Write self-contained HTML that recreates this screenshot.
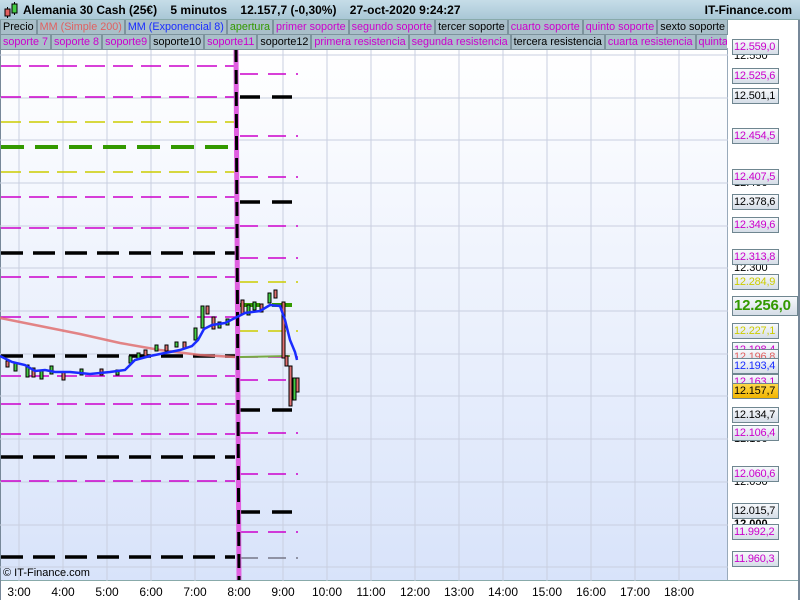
<!DOCTYPE html>
<html><head><meta charset="utf-8"><style>
body{margin:0;width:800px;height:600px;overflow:hidden;background:#fff;font-family:"Liberation Sans",sans-serif;position:relative}
.hdr{position:absolute;left:0;top:0;width:800px;height:19px;background:linear-gradient(#c6dde8,#a9c7d6);border-bottom:1px solid #8aa;font-weight:bold;font-size:12px}
.hdr span{position:absolute;top:3px}
.leg{position:absolute;left:0;height:15px;font-size:10.8px;display:flex}
.leg div{background:#a9bfc9;border:1px solid #7d939d;border-top:none;padding:0 2px;line-height:14px;white-space:nowrap;margin-right:0}
.lbl{position:absolute;left:732px;font-size:11px;line-height:14px;text-align:left;padding-left:1px;background:linear-gradient(#f7f9fc,#d5dde7);border:1px solid #6f8690;box-sizing:border-box;width:47px;height:16px;letter-spacing:-0.2px;white-space:nowrap}
.ax{position:absolute;left:734px;font-size:11px;color:#000}
.t{position:absolute;top:585px;font-size:12px;width:40px;text-align:center;margin-left:-20px}
</style></head><body>
<svg width="800" height="600" style="position:absolute;left:0;top:0">
<defs><linearGradient id="g" x1="0" y1="0" x2="0" y2="1"><stop offset="0" stop-color="#ffffff"/><stop offset="1" stop-color="#d8e3fa"/></linearGradient></defs>
<rect x="0" y="48" width="728" height="533" fill="url(#g)"/>
<rect x="728" y="48" width="72" height="533" fill="#fff"/>
<line x1="727.5" y1="48" x2="727.5" y2="581" stroke="#9ab" stroke-width="1"/>
<line x1="0" y1="580.5" x2="800" y2="580.5" stroke="#8aa"/>
<line x1="0.5" y1="20" x2="0.5" y2="600" stroke="#789"/>
<line x1="799" y1="20" x2="799" y2="600" stroke="#789" stroke-width="2"/>
<g stroke="#c9cfe0" stroke-width="1">
<line x1="0" y1="55" x2="728" y2="55"/><line x1="0" y1="98" x2="728" y2="98"/><line x1="0" y1="140" x2="728" y2="140"/><line x1="0" y1="183" x2="728" y2="183"/><line x1="0" y1="226" x2="728" y2="226"/><line x1="0" y1="268" x2="728" y2="268"/><line x1="0" y1="311" x2="728" y2="311"/><line x1="0" y1="354" x2="728" y2="354"/><line x1="0" y1="396" x2="728" y2="396"/><line x1="0" y1="439" x2="728" y2="439"/><line x1="0" y1="482" x2="728" y2="482"/><line x1="0" y1="525" x2="728" y2="525"/><line x1="0" y1="567" x2="728" y2="567"/>
<line x1="19" y1="48" x2="19" y2="581"/><line x1="63" y1="48" x2="63" y2="581"/><line x1="107" y1="48" x2="107" y2="581"/><line x1="151" y1="48" x2="151" y2="581"/><line x1="195" y1="48" x2="195" y2="581"/><line x1="283" y1="48" x2="283" y2="581"/><line x1="327" y1="48" x2="327" y2="581"/><line x1="371" y1="48" x2="371" y2="581"/><line x1="415" y1="48" x2="415" y2="581"/><line x1="459" y1="48" x2="459" y2="581"/><line x1="503" y1="48" x2="503" y2="581"/><line x1="547" y1="48" x2="547" y2="581"/><line x1="591" y1="48" x2="591" y2="581"/><line x1="635" y1="48" x2="635" y2="581"/><line x1="679" y1="48" x2="679" y2="581"/>
</g>
<g stroke-dasharray="20 8" stroke-width="1.5" fill="none">
<g stroke="#cc00cc"><line x1="1" y1="66" x2="235" y2="66"/><line x1="1" y1="97" x2="235" y2="97"/><line x1="1" y1="197" x2="235" y2="197"/><line x1="1" y1="228" x2="235" y2="228"/><line x1="1" y1="277" x2="235" y2="277"/><line x1="1" y1="317" x2="235" y2="317"/><line x1="1" y1="376" x2="235" y2="376"/><line x1="1" y1="404" x2="235" y2="404"/><line x1="1" y1="434" x2="235" y2="434"/><line x1="1" y1="481" x2="235" y2="481"/></g>
<g stroke="#cccc00"><line x1="1" y1="122" x2="235" y2="122"/><line x1="1" y1="172" x2="235" y2="172"/></g>
</g>
<line x1="1" y1="147" x2="235" y2="147" stroke="#339900" stroke-width="4" stroke-dasharray="23 11"/>
<g stroke="#000" stroke-width="3.5" stroke-dasharray="22 10">
<line x1="1" y1="253" x2="235" y2="253"/><line x1="1" y1="356" x2="235" y2="356"/><line x1="1" y1="457" x2="235" y2="457"/><line x1="1" y1="557" x2="235" y2="557"/>
</g>
<g stroke-dasharray="18 10" stroke-width="1.5">
<g stroke="#cc00cc"><line x1="240" y1="74" x2="298" y2="74"/><line x1="240" y1="136" x2="298" y2="136"/><line x1="240" y1="177" x2="298" y2="177"/><line x1="240" y1="226" x2="298" y2="226"/><line x1="240" y1="258" x2="298" y2="258"/><line x1="240" y1="357" x2="298" y2="357"/><line x1="240" y1="380" x2="298" y2="380"/><line x1="240" y1="433" x2="298" y2="433"/><line x1="240" y1="474" x2="298" y2="474"/><line x1="240" y1="532" x2="298" y2="532"/></g>
<g stroke="#cccc00"><line x1="240" y1="282" x2="298" y2="282"/><line x1="240" y1="331" x2="298" y2="331"/></g>
<line x1="240" y1="558" x2="298" y2="558" stroke="#778"/>
</g>
<g stroke="#000" stroke-width="3.5" stroke-dasharray="20 12"><line x1="240" y1="97" x2="298" y2="97"/><line x1="240" y1="202" x2="298" y2="202"/><line x1="240" y1="410" x2="298" y2="410"/><line x1="240" y1="512" x2="298" y2="512"/></g>
<line x1="240" y1="305" x2="298" y2="305" stroke="#339900" stroke-width="4" stroke-dasharray="20 12"/>
<line x1="236" y1="48" x2="239" y2="580" stroke="#e060e0" stroke-width="5"/>
<line x1="236" y1="48" x2="239" y2="580" stroke="#000" stroke-width="3" stroke-dasharray="14 8"/>
<polyline points="0,318 40,326 80,334 120,343 160,350 200,355 235,357" fill="none" stroke="#e07070" stroke-width="2.5" opacity="0.85"/>
<polyline points="240,357 290,356" fill="none" stroke="#77aa44" stroke-width="2"/>
<g stroke="#000" stroke-width="1">
<rect x="6" y="361" width="3" height="6" fill="#e07070"/><rect x="14" y="363" width="3" height="8" fill="#44cc44"/><rect x="26" y="365" width="3" height="12" fill="#44cc44"/><rect x="32" y="368" width="3" height="9" fill="#e07070"/><rect x="40" y="370" width="3" height="9" fill="#44cc44"/>
<rect x="50" y="366" width="3" height="8" fill="#44cc44"/><rect x="62" y="372" width="3" height="8" fill="#e07070"/><rect x="80" y="369" width="3" height="6" fill="#44cc44"/><rect x="100" y="369" width="3" height="6" fill="#e07070"/><rect x="116" y="370" width="3" height="5" fill="#44cc44"/>
<rect x="129" y="356" width="3" height="7" fill="#44cc44"/><rect x="137" y="353" width="3" height="6" fill="#44cc44"/><rect x="144" y="350" width="3" height="6" fill="#e07070"/><rect x="155" y="345" width="3" height="6" fill="#44cc44"/><rect x="165" y="345" width="3" height="6" fill="#e07070"/><rect x="175" y="342" width="3" height="5" fill="#44cc44"/><rect x="183" y="342" width="3" height="6" fill="#e07070"/>
<rect x="194" y="328" width="3" height="12" fill="#44cc44"/><rect x="201" y="306" width="3" height="22" fill="#44cc44"/><rect x="206" y="306" width="3" height="8" fill="#e07070"/><rect x="212" y="317" width="3" height="12" fill="#e07070"/><rect x="218" y="322" width="3" height="6" fill="#44cc44"/><rect x="226" y="319" width="3" height="6" fill="#44cc44"/>
<rect x="241" y="300" width="3" height="14" fill="#e07070"/><rect x="247" y="305" width="3" height="10" fill="#44cc44"/><rect x="253" y="302" width="3" height="8" fill="#44cc44"/><rect x="260" y="304" width="3" height="8" fill="#e07070"/><rect x="268" y="293" width="3" height="10" fill="#44cc44"/><rect x="274" y="290" width="3" height="8" fill="#e07070"/>
<rect x="282" y="302" width="3" height="56" fill="#e07070"/><rect x="285" y="356" width="3" height="10" fill="#e07070"/><rect x="289" y="366" width="3" height="40" fill="#e07070"/><rect x="293" y="378" width="3" height="22" fill="#44cc44"/><rect x="296" y="378" width="3" height="14" fill="#e07070"/>
</g>
<polyline points="0,356 12,362 25,365 35,371 45,370 55,372 70,372 90,374 110,372 125,370 135,360 150,356 165,353 180,350 192,346 198,340 204,329 212,325 225,323 235,318 245,313 260,311 270,305 280,306 285,320 290,340 295,352 297,360" fill="none" stroke="#1a2cff" stroke-width="2.5"/>
</svg>
<div class="hdr">
<svg width="16" height="18" style="position:absolute;left:3px;top:1px"><line x1="4.5" y1="6" x2="4.5" y2="17" stroke="#000"/><rect x="2" y="8" width="5" height="7" fill="#e06060" stroke="#000"/><line x1="11.5" y1="1" x2="11.5" y2="14" stroke="#000"/><rect x="9" y="3" width="5" height="9" fill="#44cc44" stroke="#000"/></svg>
<span style="left:23px">Alemania 30 Cash (25€)&nbsp;&nbsp;&nbsp; 5 minutos&nbsp;&nbsp;&nbsp; 12.157,7 (-0,30%)&nbsp;&nbsp;&nbsp; 27-oct-2020 9:24:27</span>
<span style="right:8px">IT-Finance.com</span>
</div>
<div class="leg" style="top:20px"><div>Precio</div><div style="color:#e06060">MM (Simple 200)</div><div style="color:#1a2cff">MM (Exponencial 8)</div><div style="color:#339900">apertura</div><div style="color:#cc00cc">primer soporte</div><div style="color:#cc00cc">segundo soporte</div><div>tercer soporte</div><div style="color:#cc00cc">cuarto soporte</div><div style="color:#cc00cc">quinto soporte</div><div>sexto soporte</div></div>
<div class="leg" style="top:35px;width:727px;overflow:hidden"><div style="color:#cc00cc">soporte 7</div><div style="color:#cc00cc">soporte 8</div><div style="color:#cc00cc">soporte9</div><div>soporte10</div><div style="color:#cc00cc">soporte11</div><div>soporte12</div><div style="color:#cc00cc">primera resistencia</div><div style="color:#cc00cc">segunda resistencia</div><div>tercera resistencia</div><div style="color:#cc00cc">cuarta resistencia</div><div style="color:#cc00cc">quinta resistencia</div></div>
<div class="ax" style="top:50px">12.550</div><div class="ax" style="top:177px">12.400</div><div class="ax" style="top:262px">12.300</div><div class="ax" style="top:347px">12.200</div><div class="ax" style="top:390px">12.150</div><div class="ax" style="top:433px">12.100</div><div class="ax" style="top:476px">12.050</div><div class="ax" style="top:518px;font-weight:bold">12.000</div>
<div class="lbl" style="top:39px;color:#cc00cc">12.559,0</div>
<div class="lbl" style="top:68px;color:#cc00cc">12.525,6</div>
<div class="lbl" style="top:88px;color:#000">12.501,1</div>
<div class="lbl" style="top:128px;color:#cc00cc">12.454,5</div>
<div class="lbl" style="top:169px;color:#cc00cc">12.407,5</div>
<div class="lbl" style="top:194px;color:#000">12.378,6</div>
<div class="lbl" style="top:217px;color:#cc00cc">12.349,6</div>
<div class="lbl" style="top:249px;color:#cc00cc">12.313,8</div>
<div class="lbl" style="top:274px;color:#cccc00">12.284,9</div>
<div class="lbl" style="top:296px;color:#339900;font-size:15px;font-weight:bold;width:66px;height:20px;line-height:18px">12.256,0</div>
<div class="lbl" style="top:323px;color:#cccc00">12.227,1</div>
<div class="lbl" style="top:342px;color:#cc00cc">12.198,4</div>
<div class="lbl" style="top:349px;color:#e06060">12.196,8</div>
<div class="lbl" style="top:358px;color:#1a2cff">12.193,4</div>
<div class="lbl" style="top:374px;color:#cc00cc">12.163,1</div>
<div class="lbl" style="top:383px;color:#000;background:linear-gradient(#ffd84a,#f0b400)">12.157,7</div>
<div class="lbl" style="top:407px;color:#000">12.134,7</div>
<div class="lbl" style="top:425px;color:#cc00cc">12.106,4</div>
<div class="lbl" style="top:466px;color:#cc00cc">12.060,6</div>
<div class="lbl" style="top:503px;color:#000">12.015,7</div>
<div class="lbl" style="top:524px;color:#cc00cc">11.992,2</div>
<div class="lbl" style="top:551px;color:#cc00cc">11.960,3</div>
<div style="position:absolute;left:3px;top:567px;font-size:11px">© IT-Finance.com</div>
<div class="t" style="left:19px">3:00</div><div class="t" style="left:63px">4:00</div><div class="t" style="left:107px">5:00</div><div class="t" style="left:151px">6:00</div><div class="t" style="left:195px">7:00</div><div class="t" style="left:239px">8:00</div><div class="t" style="left:283px">9:00</div><div class="t" style="left:327px">10:00</div><div class="t" style="left:371px">11:00</div><div class="t" style="left:415px">12:00</div><div class="t" style="left:459px">13:00</div><div class="t" style="left:503px">14:00</div><div class="t" style="left:547px">15:00</div><div class="t" style="left:591px">16:00</div><div class="t" style="left:635px">17:00</div><div class="t" style="left:679px">18:00</div>
</body></html>
